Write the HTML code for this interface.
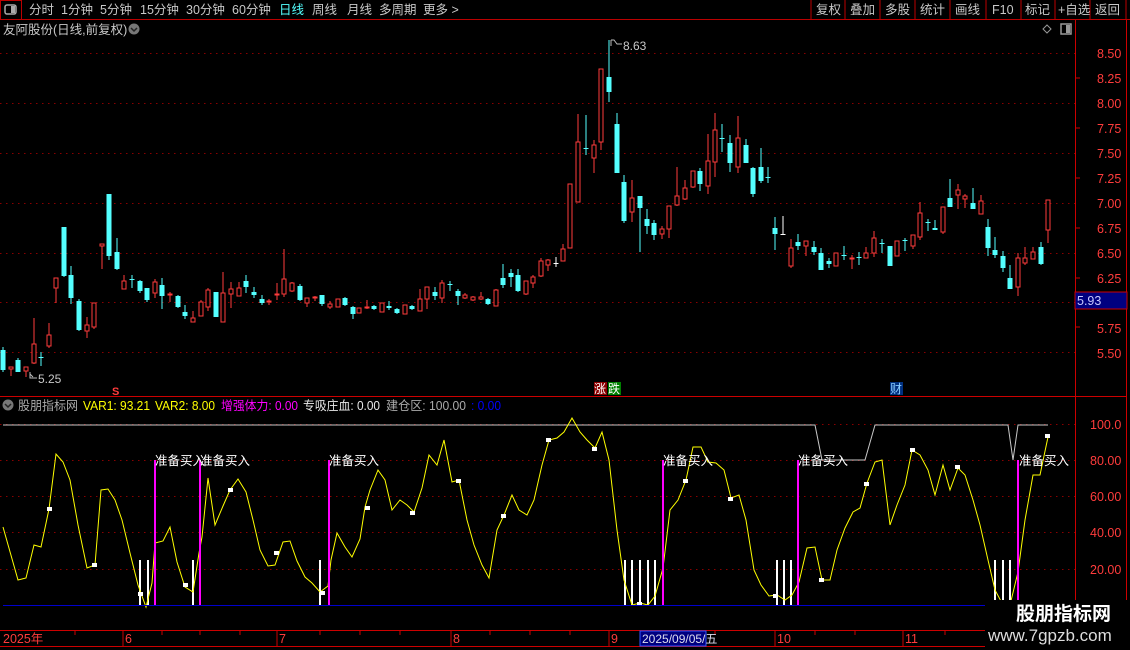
<!DOCTYPE html>
<html><head><meta charset="utf-8"><style>
html,body{margin:0;padding:0;background:#000;width:1130px;height:650px;overflow:hidden;font-family:"Liberation Sans","Noto Sans CJK SC",sans-serif;}
svg{display:block}
text{font-family:"Liberation Sans","Noto Sans CJK SC",sans-serif;}
</style></head><body>
<svg width="1130" height="650" viewBox="0 0 1130 650" xmlns="http://www.w3.org/2000/svg">
<rect width="1130" height="650" fill="#000"/>
<!-- top bar -->
<line x1="0" y1="19.5" x2="1130" y2="19.5" stroke="#b00" />
<rect x="0.5" y="0.5" width="21" height="19" fill="none" stroke="#b00"/>
<rect x="5" y="5" width="11" height="9" rx="2" fill="none" stroke="#aaa" stroke-width="1.5"/>
<rect x="11" y="6" width="4" height="7" fill="#aaa"/>
<g font-size="12.5" fill="#c8c8c8">
<text x="29" y="14">分时</text><text x="61" y="14">1分钟</text><text x="100" y="14">5分钟</text><text x="140" y="14">15分钟</text><text x="186" y="14">30分钟</text><text x="232" y="14">60分钟</text>
<text x="279" y="14" fill="#54ffff">日线</text><text x="312" y="14">周线</text><text x="347" y="14">月线</text><text x="379" y="14">多周期</text><text x="423" y="14">更多 &gt;</text>
</g>
<g stroke="#b00"><line x1="811" y1="0" x2="811" y2="20"/><line x1="845" y1="0" x2="845" y2="20"/><line x1="880" y1="0" x2="880" y2="20"/><line x1="915" y1="0" x2="915" y2="20"/><line x1="950" y1="0" x2="950" y2="20"/><line x1="986" y1="0" x2="986" y2="20"/><line x1="1021" y1="0" x2="1021" y2="20"/><line x1="1055" y1="0" x2="1055" y2="20"/><line x1="1090" y1="0" x2="1090" y2="20"/><line x1="1126" y1="0" x2="1126" y2="20"/></g>
<g font-size="12.5" fill="#c8c8c8">
<text x="816" y="14">复权</text><text x="850" y="14">叠加</text><text x="885" y="14">多股</text><text x="920" y="14">统计</text><text x="955" y="14">画线</text><text x="992" y="14">F10</text><text x="1025" y="14">标记</text><text x="1058" y="14">+自选</text><text x="1095" y="14">返回</text>
</g>
<text x="3" y="34" font-size="12.5" fill="#c8c8c8">友阿股份(日线,前复权)</text>
<circle cx="134" cy="29" r="5.5" fill="#777"/><path d="M131 28l3 3 3-3" stroke="#222" stroke-width="1.5" fill="none"/>
<path d="M1047 25l4 4-4 4-4-4z" fill="none" stroke="#999"/>
<rect x="1061" y="24" width="10" height="10" fill="none" stroke="#999" stroke-width="1.5"/><rect x="1066" y="25" width="4" height="8" fill="#999"/>
<!-- axis lines -->
<line x1="1075.5" y1="20" x2="1075.5" y2="630" stroke="#c00"/>
<line x1="1126.5" y1="20" x2="1126.5" y2="630" stroke="#c00"/>
<line x1="0" y1="396.5" x2="1127" y2="396.5" stroke="#c00"/>
<!-- price grid -->
<g stroke="#8a0000" stroke-dasharray="1.5 4.5">
<line x1="0" y1="53.5" x2="1075" y2="53.5"/><line x1="0" y1="103.5" x2="1075" y2="103.5"/><line x1="0" y1="153.5" x2="1075" y2="153.5"/><line x1="0" y1="203.5" x2="1075" y2="203.5"/><line x1="0" y1="253.5" x2="1075" y2="253.5"/><line x1="0" y1="302.5" x2="1075" y2="302.5"/><line x1="0" y1="352.5" x2="1075" y2="352.5"/>
<line x1="0" y1="424.5" x2="1075" y2="424.5"/><line x1="0" y1="460.5" x2="1075" y2="460.5"/><line x1="0" y1="496.5" x2="1075" y2="496.5"/><line x1="0" y1="532.5" x2="1075" y2="532.5"/><line x1="0" y1="569.5" x2="1075" y2="569.5"/>
</g>
<g font-size="12.5" fill="#ff3c3c">
<text x="1097" y="58">8.50</text><text x="1097" y="83">8.25</text><text x="1097" y="108">8.00</text><text x="1097" y="133">7.75</text><text x="1097" y="158">7.50</text><text x="1097" y="183">7.25</text><text x="1097" y="208">7.00</text><text x="1097" y="233">6.75</text><text x="1097" y="258">6.50</text><text x="1097" y="283">6.25</text><text x="1097" y="333">5.75</text><text x="1097" y="358">5.50</text>
<text x="1090" y="429">100.0</text><text x="1090" y="465">80.00</text><text x="1090" y="501">60.00</text><text x="1090" y="537">40.00</text><text x="1090" y="574">20.00</text>
</g>
<g stroke="#c00"><line x1="1075" y1="78" x2="1080" y2="78"/><line x1="1075" y1="128" x2="1080" y2="128"/><line x1="1075" y1="178" x2="1080" y2="178"/><line x1="1075" y1="228" x2="1080" y2="228"/><line x1="1075" y1="278" x2="1080" y2="278"/><line x1="1075" y1="327" x2="1080" y2="327"/></g>
<rect x="1075" y="292" width="52" height="17" fill="#000080" stroke="#c00"/>
<text x="1077" y="305" font-size="12.5" fill="#c8c8ff">5.93</text>
<!-- candles red -->
<g stroke="#ff3c3c" fill="#000">
<path d="M11 367V376M26 367V377M34 318V364M49 323V348M56 278V303M87 317V338M94 303V329M102 244V269M124 275V289M155 279V298M170 292V302M193 311V322M201 300V316M208 288V311M223 272V322M231 282V308M239 282V296M269 299V305M277 283V300M284 249V297M292 282V292M307 298V307M315 296V301M330 301V309M338 299V307M359 308V313M367 300V309M382 303V312M405 305V314M420 289V311M427 287V309M442 280V303M465 293V299M473 296V301M481 292V300M496 289V306M526 281V295M533 275V288M541 258V277M548 259V271M563 244V261M570 184V248M578 114V202M594 140V173M601 69V150M632 180V222M662 226V239M669 206V238M677 167V206M685 180V200M693 171V188M708 134V194M715 113V177M738 116V173M791 239V268M806 241V256M836 253V266M852 255V269M866 247V258M874 231V257M897 241V256M913 235V249M920 202V240M943 207V234M958 184V209M965 194V208M981 195V214M1018 253V296M1025 247V265M1033 247V259M1048 200V243"/>
<rect x="9" y="367" width="4" height="2"/><rect x="24" y="367" width="4" height="4"/><rect x="32" y="344" width="4" height="19"/><rect x="47" y="335" width="4" height="11"/><rect x="54" y="278" width="4" height="10"/><rect x="85" y="325" width="4" height="6"/><rect x="92" y="303" width="4" height="24"/><rect x="100" y="244" width="4" height="2"/><rect x="122" y="281" width="4" height="8"/><rect x="153" y="282" width="4" height="11"/><rect x="168" y="294" width="4" height="1"/><rect x="191" y="318" width="4" height="4"/><rect x="199" y="302" width="4" height="14"/><rect x="206" y="290" width="4" height="17"/><rect x="221" y="293" width="4" height="29"/><rect x="229" y="289" width="4" height="5"/><rect x="237" y="288" width="4" height="8"/><rect x="267" y="301" width="4" height="1"/><rect x="275" y="294" width="4" height="1"/><rect x="282" y="279" width="4" height="15"/><rect x="290" y="283" width="4" height="8"/><rect x="305" y="298" width="4" height="5"/><rect x="313" y="297" width="4" height="1"/><rect x="328" y="304" width="4" height="3"/><rect x="336" y="299" width="4" height="8"/><rect x="357" y="308" width="4" height="5"/><rect x="365" y="307" width="4" height="1"/><rect x="380" y="303" width="4" height="9"/><rect x="403" y="305" width="4" height="9"/><rect x="418" y="299" width="4" height="12"/><rect x="425" y="287" width="4" height="12"/><rect x="440" y="283" width="4" height="15"/><rect x="463" y="295" width="4" height="3"/><rect x="471" y="297" width="4" height="3"/><rect x="479" y="297" width="4" height="2"/><rect x="494" y="290" width="4" height="16"/><rect x="524" y="281" width="4" height="13"/><rect x="531" y="277" width="4" height="6"/><rect x="539" y="261" width="4" height="15"/><rect x="546" y="260" width="4" height="5"/><rect x="561" y="249" width="4" height="12"/><rect x="568" y="184" width="4" height="64"/><rect x="576" y="142" width="4" height="60"/><rect x="592" y="145" width="4" height="13"/><rect x="599" y="69" width="4" height="73"/><rect x="630" y="198" width="4" height="14"/><rect x="660" y="229" width="4" height="5"/><rect x="667" y="206" width="4" height="23"/><rect x="675" y="196" width="4" height="9"/><rect x="683" y="188" width="4" height="11"/><rect x="691" y="171" width="4" height="16"/><rect x="706" y="161" width="4" height="25"/><rect x="713" y="130" width="4" height="32"/><rect x="736" y="138" width="4" height="29"/><rect x="789" y="248" width="4" height="18"/><rect x="804" y="241" width="4" height="5"/><rect x="834" y="253" width="4" height="13"/><rect x="850" y="258" width="4" height="1"/><rect x="864" y="253" width="4" height="5"/><rect x="872" y="238" width="4" height="15"/><rect x="895" y="241" width="4" height="15"/><rect x="911" y="235" width="4" height="11"/><rect x="918" y="213" width="4" height="24"/><rect x="941" y="207" width="4" height="25"/><rect x="956" y="190" width="4" height="5"/><rect x="963" y="196" width="4" height="3"/><rect x="979" y="201" width="4" height="13"/><rect x="1016" y="258" width="4" height="29"/><rect x="1023" y="258" width="4" height="5"/><rect x="1031" y="252" width="4" height="7"/><rect x="1046" y="200" width="4" height="30"/>
</g>
<!-- candles cyan -->
<g stroke="#54ffff" fill="#54ffff">
<path d="M3 347V372M18 358V372M41 352V366M64 227V277M71 266V304M79 299V331M109 194V260M117 238V270M132 275V288M140 280V293M147 288V302M162 278V309M178 295V308M185 305V319M216 292V317M246 275V293M254 287V298M262 295V305M300 284V301M322 295V306M345 297V306M353 306V319M374 305V310M389 301V310M397 308V314M412 305V310M435 287V300M450 281V291M458 289V305M488 298V305M503 264V288M511 269V287M518 269V292M586 115V155M609 40V102M617 113V173M624 175V223M640 196V252M647 209V234M654 220V240M700 168V191M722 124V152M730 135V172M746 139V163M753 167V197M761 148V183M768 167V183M775 217V250M798 234V250M814 241V255M821 248V270M829 258V268M844 246V260M859 252V265M882 239V253M890 246V266M905 238V251M928 219V231M935 220V230M950 179V207M973 188V209M988 219V256M995 237V258M1003 251V272M1010 265V289M1041 242V265"/>
<g stroke="none">
<rect x="0.5" y="350" width="5" height="20"/><rect x="15.5" y="360" width="5" height="12"/><rect x="38.5" y="357" width="5" height="1"/><rect x="61.5" y="227" width="5" height="49"/><rect x="68.5" y="275" width="5" height="23"/><rect x="76.5" y="301" width="5" height="29"/><rect x="106.5" y="194" width="5" height="62"/><rect x="114.5" y="252" width="5" height="17"/><rect x="129.5" y="279" width="5" height="1"/><rect x="137.5" y="281" width="5" height="10"/><rect x="144.5" y="288" width="5" height="12"/><rect x="159.5" y="285" width="5" height="11"/><rect x="175.5" y="296" width="5" height="11"/><rect x="182.5" y="312" width="5" height="4"/><rect x="213.5" y="292" width="5" height="25"/><rect x="243.5" y="281" width="5" height="6"/><rect x="251.5" y="292" width="5" height="3"/><rect x="259.5" y="299" width="5" height="4"/><rect x="297.5" y="286" width="5" height="14"/><rect x="319.5" y="295" width="5" height="9"/><rect x="342.5" y="298" width="5" height="7"/><rect x="350.5" y="307" width="5" height="7"/><rect x="371.5" y="306" width="5" height="3"/><rect x="386.5" y="306" width="5" height="2"/><rect x="394.5" y="309" width="5" height="4"/><rect x="409.5" y="306" width="5" height="3"/><rect x="432.5" y="292" width="5" height="4"/><rect x="447.5" y="284" width="5" height="1"/><rect x="455.5" y="291" width="5" height="5"/><rect x="485.5" y="299" width="5" height="5"/><rect x="500.5" y="278" width="5" height="7"/><rect x="508.5" y="273" width="5" height="4"/><rect x="515.5" y="275" width="5" height="16"/><rect x="583.5" y="148" width="5" height="1"/><rect x="606.5" y="77" width="5" height="15"/><rect x="614.5" y="124" width="5" height="49"/><rect x="621.5" y="182" width="5" height="39"/><rect x="637.5" y="196" width="5" height="12"/><rect x="644.5" y="219" width="5" height="7"/><rect x="651.5" y="223" width="5" height="12"/><rect x="697.5" y="171" width="5" height="13"/><rect x="719.5" y="138" width="5" height="1"/><rect x="727.5" y="143" width="5" height="20"/><rect x="743.5" y="145" width="5" height="18"/><rect x="750.5" y="168" width="5" height="26"/><rect x="758.5" y="167" width="5" height="14"/><rect x="765.5" y="177" width="5" height="1"/><rect x="772.5" y="228" width="5" height="6"/><rect x="795.5" y="242" width="5" height="4"/><rect x="811.5" y="247" width="5" height="5"/><rect x="818.5" y="253" width="5" height="17"/><rect x="826.5" y="261" width="5" height="3"/><rect x="841.5" y="255" width="5" height="1"/><rect x="856.5" y="257" width="5" height="1"/><rect x="879.5" y="243" width="5" height="1"/><rect x="887.5" y="246" width="5" height="20"/><rect x="902.5" y="240" width="5" height="1"/><rect x="925.5" y="222" width="5" height="1"/><rect x="932.5" y="228" width="5" height="2"/><rect x="947.5" y="198" width="5" height="9"/><rect x="970.5" y="203" width="5" height="6"/><rect x="985.5" y="227" width="5" height="21"/><rect x="992.5" y="250" width="5" height="5"/><rect x="1000.5" y="256" width="5" height="12"/><rect x="1007.5" y="278" width="5" height="11"/><rect x="1038.5" y="247" width="5" height="17"/>
</g></g>
<g stroke="#fff"><path d="M556 257V267M553.5 263.5H558.5M783 216V234M780.5 234.5H785.5"/></g>
<!-- price labels -->
<path d="M30 372V378H37M30 374l3 3" stroke="#bbb" fill="none"/>
<text x="38" y="383" font-size="12" fill="#c8c8c8">5.25</text>
<path d="M611 40V46M611 40h3l3 4h5" stroke="#bbb" fill="none"/>
<text x="623" y="50" font-size="12" fill="#c8c8c8">8.63</text>
<text x="112" y="395" font-size="11" fill="#ff3c3c" font-weight="bold">S</text>
<rect x="594" y="382" width="13" height="13" fill="#8b0000"/><text x="594" y="393" font-size="12" fill="#fff">涨</text>
<rect x="608" y="382" width="13" height="13" fill="#008000"/><text x="608" y="393" font-size="12" fill="#fff">跌</text>
<rect x="890" y="382" width="13" height="13" fill="#003080"/><text x="890" y="393" font-size="12" fill="#8cf">财</text>
<!-- indicator header -->
<circle cx="8" cy="405" r="5.5" fill="#777"/><path d="M5 404l3 3 3-3" stroke="#222" stroke-width="1.5" fill="none"/>
<g font-size="12.5">
<text x="18" y="410" fill="#aaa" textLength="60" lengthAdjust="spacingAndGlyphs">股朋指标网</text>
<text x="83" y="410" fill="#ffff00" textLength="67" lengthAdjust="spacingAndGlyphs">VAR1: 93.21</text>
<text x="155" y="410" fill="#ffff00" textLength="60" lengthAdjust="spacingAndGlyphs">VAR2: 8.00</text>
<text x="221" y="410" fill="#ff00ff" textLength="77" lengthAdjust="spacingAndGlyphs">增强体力: 0.00</text>
<text x="303" y="410" fill="#e8e8e8" textLength="77" lengthAdjust="spacingAndGlyphs">专吸庄血: 0.00</text>
<text x="386" y="410" fill="#aaa" textLength="80" lengthAdjust="spacingAndGlyphs">建仓区: 100.00</text>
<text x="471" y="410" fill="#0000ff" textLength="30" lengthAdjust="spacingAndGlyphs">: 0.00</text>
</g>
<!-- indicator -->
<polyline fill="none" stroke="#c8c8c8" points="3,425 815,425 822,460 865,460 875,425 1008,425 1013,460 1018,425 1048,425"/>
<g stroke="#fff" stroke-width="2"><path d="M140 560V605M148 560V605M193 560V605M320 560V605M625 560V605M632 560V605M640 560V605M648 560V605M655 560V605M777 560V605M784 560V605M791 560V605M995 560V605M1003 560V605M1010 560V605"/></g>
<polyline fill="none" stroke="#ffff00" points="3,527 18,580 26,578 34,545 41,547 49,509 56,454 63,462 70,480 78,525 87,568 95,565 101,490 108,489 115,500 122,520 130,553 138,585 146,607 152,583 155,543 163,541 170,527 177,562 185,587 193,592 199,553 202,537 208,478 215,525 223,506 230,490 238,479 246,492 253,520 260,550 268,566 275,565 283,542 290,541 297,561 305,577 312,583 320,592 328,586 331,560 337,533 345,547 352,557 360,539 365,507 370,490 378,470 385,480 392,510 400,500 407,505 414,512 422,488 429,455 437,465 444,440 452,482 459,480 467,520 474,545 482,565 489,578 497,530 504,515 512,495 519,510 527,515 534,500 542,465 549,440 557,438 564,432 572,418 580,432 587,440 595,448 602,432 609,460 617,530 624,580 632,605 640,603 648,605 655,596 663,568 670,510 678,500 686,480 693,447 701,447 708,462 716,463 724,470 731,498 739,495 746,520 754,570 761,585 769,596 777,595 785,600 792,595 799,582 807,548 815,547 822,580 830,580 837,550 845,528 853,512 860,508 867,483 875,462 882,460 890,525 897,505 905,485 912,450 920,455 928,470 935,495 943,465 950,490 958,468 965,475 973,500 980,525 988,560 995,590 1003,605 1010,605 1018,572 1025,520 1033,475 1040,475 1048,437"/>
<g fill="#fff"><rect x="47" y="507" width="5" height="4"/><rect x="92" y="563" width="5" height="4"/><rect x="138" y="592" width="5" height="4"/><rect x="183" y="583" width="5" height="4"/><rect x="228" y="488" width="5" height="4"/><rect x="274" y="551" width="5" height="4"/><rect x="320" y="591" width="5" height="4"/><rect x="365" y="506" width="5" height="4"/><rect x="410" y="511" width="5" height="4"/><rect x="456" y="479" width="5" height="4"/><rect x="501" y="514" width="5" height="4"/><rect x="546" y="438" width="5" height="4"/><rect x="592" y="447" width="5" height="4"/><rect x="637" y="602" width="5" height="4"/><rect x="683" y="479" width="5" height="4"/><rect x="728" y="497" width="5" height="4"/><rect x="773" y="594" width="5" height="4"/><rect x="819" y="578" width="5" height="4"/><rect x="864" y="482" width="5" height="4"/><rect x="910" y="448" width="5" height="4"/><rect x="955" y="465" width="5" height="4"/><rect x="1045" y="434" width="5" height="4"/></g>
<g fill="#ff00ff"><rect x="154" y="460" width="2" height="145"/><rect x="199" y="460" width="2" height="145"/><rect x="328" y="460" width="2" height="145"/><rect x="662" y="460" width="2" height="145"/><rect x="797" y="460" width="2" height="145"/><rect x="1017" y="460" width="2" height="145"/></g>
<g font-size="12.5" fill="#fff">
<text x="155" y="465">准备买入</text><text x="200" y="465">准备买入</text><text x="329" y="465">准备买入</text><text x="663" y="465">准备买入</text><text x="798" y="465">准备买入</text><text x="1019" y="465">准备买入</text>
</g>
<line x1="3" y1="605.5" x2="1075" y2="605.5" stroke="#0000cc"/>
<!-- date axis -->
<line x1="0" y1="630.5" x2="985" y2="630.5" stroke="#c00"/>
<line x1="0" y1="646.5" x2="985" y2="646.5" stroke="#c00"/>
<g stroke="#c00"><path d="M123 631V646M277 631V646M451 631V646M609 631V646M775 631V646M903 631V646M75 631V635M162 631V635M200 631V635M240 631V635M320 631V635M360 631V635M400 631V635M490 631V635M530 631V635M570 631V635M680 631V635M715 631V635M815 631V635M855 631V635M945 631V635"/></g>
<g font-size="12.5" fill="#ff3c3c"><text x="3" y="643">2025年</text><text x="125" y="643">6</text><text x="279" y="643">7</text><text x="453" y="643">8</text><text x="611" y="643">9</text><text x="777" y="643">10</text><text x="905" y="643">11</text></g>
<rect x="640" y="631" width="66" height="15" fill="#000080" stroke="#3355ff"/>
<text x="642" y="643" font-size="12" fill="#dde">2025/09/05/五</text>
<!-- watermark -->
<rect x="985" y="600" width="145" height="50" fill="#000"/>
<text x="1016" y="620" font-size="19" font-weight="bold" fill="#fff">股朋指标网</text>
<text x="988" y="641" font-size="17" fill="#ddd">www.7gpzb.com</text>
</svg>
</body></html>
